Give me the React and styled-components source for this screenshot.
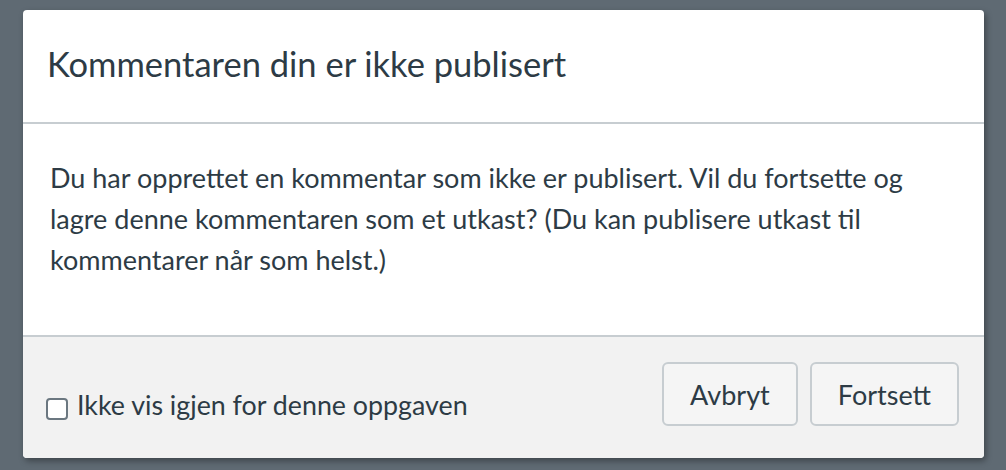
import React from "react";
import styled, { createGlobalStyle } from "styled-components";

const GlobalStyle = createGlobalStyle`
  html, body {
    margin: 0;
    padding: 0;
    background: #5f6a73;
    font-family: Lato, "Noto Sans", sans-serif;
  }
`;

const Page = styled.div`
  padding: 10px 22px 0 23px;
  height: 470px;
  box-sizing: border-box;
`;

const Dialog = styled.div`
  width: 961px;
  background: #fff;
  border-radius: 4px;
  box-shadow: 2px 3px 6px rgba(0, 0, 0, 0.35);
  overflow: hidden;
  color: #2d3b45;
`;

const Header = styled.div`
  height: 114px;
  display: flex;
  align-items: center;
  padding: 0 24px;
  border-bottom: 2px solid #c7cdd1;
  box-sizing: border-box;
`;

const Title = styled.h2`
  margin: 0;
  font-size: 34.5px;
  font-weight: 400;
  padding-bottom: 6px;
`;

const Body = styled.div`
  padding: 33px 27px 0;
  font-size: 27px;
  line-height: 41px;
  height: 211px;
  box-sizing: border-box;
`;

const Footer = styled.div`
  background: #f2f2f2;
  border-top: 2px solid #c7cdd1;
  height: 123px;
  box-sizing: border-box;
  padding: 25px 25px 0 23px;
  display: flex;
  justify-content: space-between;
  align-items: flex-start;
`;

const CheckLabel = styled.label`
  display: flex;
  align-items: center;
  gap: 9px;
  font-size: 26.8px;
  margin-top: 27px;
`;

const Box = styled.span`
  width: 18px;
  height: 18px;
  border: 2px solid #6b7780;
  border-radius: 4px;
  background: #fff;
  margin-top: 8px;
`;

const Actions = styled.div`
  display: flex;
  gap: 12px;
`;

const Button = styled.button`
  height: 64px;
  padding: 0 ${(p) => p.$pad}px;
  font-family: inherit;
  font-size: 27px;
  color: #2d3b45;
  background: #f5f5f5;
  border: 2px solid #c7cdd1;
  border-radius: 6px;
`;

export default function App() {
  return (
    <>
      <GlobalStyle />
      <Page>
        <Dialog>
          <Header>
            <Title>Kommentaren din er ikke publisert</Title>
          </Header>
          <Body>
            Du har opprettet en kommentar som ikke er publisert. Vil du fortsette og
            lagre denne kommentaren som et utkast? (Du kan publisere utkast til
            kommentarer når som helst.)
          </Body>
          <Footer>
            <CheckLabel>
              <Box />
              Ikke vis igjen for denne oppgaven
            </CheckLabel>
            <Actions>
              <Button $pad={26}>Avbryt</Button>
              <Button $pad={26}>Fortsett</Button>
            </Actions>
          </Footer>
        </Dialog>
      </Page>
    </>
  );
}
